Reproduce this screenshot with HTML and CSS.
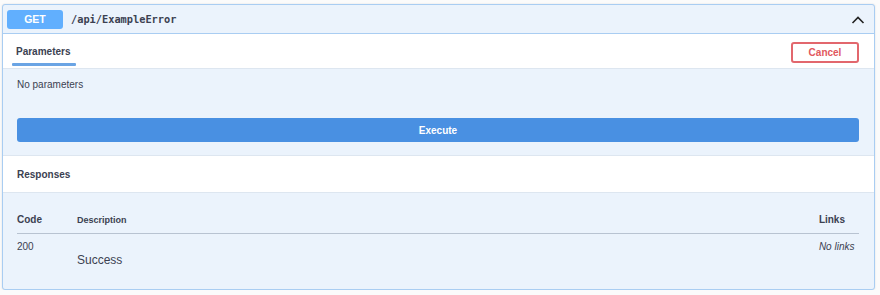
FILE: index.html
```html
<!DOCTYPE html>
<html lang="en">
<head>
    <meta charset="UTF-8">
    <title>/api/ExampleError</title>
    <link rel="stylesheet" href="styles.css">
</head>
<body>
    <div class="opblock">
        <div class="summary">
            <span class="method">GET</span>
            <span class="path">/api/ExampleError</span>
            <svg class="chevron" width="14" height="10" viewBox="0 0 14 10">
                <path d="M1.5 8 L7 2.5 L12.5 8" fill="none" stroke="#222" stroke-width="1.6"/>
            </svg>
        </div>
        <div class="section-head">
            <div class="tab">Parameters</div>
            <button class="cancel-btn">Cancel</button>
        </div>
        <div class="params-body">
            <p class="no-params">No parameters</p>
            <button class="execute-btn">Execute</button>
        </div>
        <div class="section-head responses-head">
            <h4>Responses</h4>
        </div>
        <div class="responses-body">
            <table class="responses">
                <thead>
                    <tr>
                        <th class="col-code">Code</th>
                        <th class="col-desc">Description</th>
                        <th class="col-links">Links</th>
                    </tr>
                </thead>
                <tbody>
                    <tr>
                        <td class="col-code">200</td>
                        <td class="col-desc"><div class="desc">Success</div></td>
                        <td class="col-links"><i>No links</i></td>
                    </tr>
                </tbody>
            </table>
        </div>
    </div>
</body>
</html>
```

FILE: styles.css
```css
body {
    margin: 0;
    padding: 4px 5px 0 2px;
    background-color: #fbfbfb;
    font-family: "Liberation Sans", Arial, sans-serif;
    color: #3b4151;
}
.opblock {
    border: 1px solid #a9cdf2;
    border-radius: 3px;
    background-color: #ebf3fc;
    box-shadow: 0 0 2px rgba(0, 0, 0, 0.12);
    height: 286px;
    box-sizing: border-box;
}
.summary {
    display: flex;
    align-items: center;
    height: 28px;
    padding: 0 4px;
    border-bottom: 1px solid #a9cdf2;
}
.method {
    width: 56px;
    height: 19px;
    line-height: 19px;
    text-align: center;
    background-color: #61affe;
    color: white;
    font-size: 10.5px;
    font-weight: bold;
    border-radius: 3px;
}
.path {
    margin-left: 8px;
    font-family: "DejaVu Sans Mono", monospace;
    font-weight: bold;
    font-size: 10.3px;
    color: #3b4151;
    flex-grow: 1;
}
.chevron {
    margin-right: 5px;
    margin-top: 1px;
}
.section-head {
    display: flex;
    align-items: center;
    justify-content: space-between;
    background-color: white;
    height: 34px;
    padding: 0 15px 0 8px;
    border-bottom: 1px solid #dde6f0;
}
.tab {
    align-self: stretch;
    display: flex;
    align-items: center;
    padding: 0 5px;
    font-size: 10px;
    font-weight: bold;
    color: #3b4151;
    box-sizing: border-box;
    position: relative;
    width: 65px;
}
.tab::after {
    content: "";
    position: absolute;
    left: 1px;
    right: 0;
    bottom: 2px;
    height: 3px;
    background-color: #6aa4e4;
    border-radius: 1px;
}
.cancel-btn {
    width: 68px;
    height: 21px;
    border: 2px solid #e2676d;
    border-radius: 3px;
    background: white;
    color: #e2575d;
    font-family: inherit;
    font-size: 10px;
    font-weight: bold;
    padding: 0;
    margin-top: 2px;
}
.params-body {
    padding: 9px 15px 13px 14px;
}
.no-params {
    margin: 0;
    font-size: 10px;
    line-height: 13px;
}
.execute-btn {
    display: block;
    width: 100%;
    height: 24px;
    margin-top: 27px;
    border: none;
    border-radius: 3px;
    background-color: #4990e2;
    color: white;
    font-family: inherit;
    font-size: 10px;
    font-weight: bold;
}
.responses-head {
    height: 36px;
    padding-left: 14px;
    border-top: 1px solid #dde6f0;
}
.responses-head h4 {
    margin: 0;
    font-size: 10px;
    font-weight: bold;
}
.responses-body {
    padding: 21px 15px 0 14px;
}
.responses {
    width: 100%;
    border-collapse: collapse;
}
.responses th {
    text-align: left;
    font-size: 10px;
    font-weight: bold;
    height: 18px;
    padding: 0;
    border-bottom: 1px solid #b8c3d1;
    vertical-align: top;
}
.responses th.col-desc {
    font-size: 9px;
    padding-top: 1px;
}
.responses td {
    padding: 0;
    vertical-align: top;
    font-size: 10px;
    padding-top: 7px;
}
.col-code {
    width: 60px;
}
.col-links {
    width: 40px;
}
.responses th.col-links {
    padding-right: 14px;
    width: 26px;
}
.responses td.col-links {
    font-size: 10px;
    color: #3b4151;
}
.desc {
    font-size: 12px;
    margin-top: 12px;
}
```
